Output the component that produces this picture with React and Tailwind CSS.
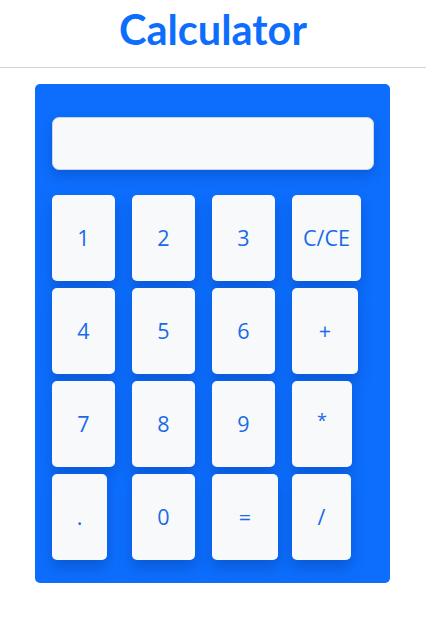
export default function App() {
  const rows = [
    [["1", 63], ["2", 63], ["3", 63], ["C/CE", 69]],
    [["4", 63], ["5", 63], ["6", 63], ["+", 66]],
    [["7", 63], ["8", 63], ["9", 63], ["*", 60]],
    [[".", 55], ["0", 63], ["=", 66], ["/", 59]],
  ];
  const widthClass = {
    63: "w-[63px]",
    69: "w-[69px]",
    66: "w-[66px]",
    60: "w-[60px]",
    55: "w-[55px]",
    59: "w-[59px]",
  };
  return (
    <div className="min-h-[620px] bg-white" style={{ fontFamily: '"Open Sans", "Noto Sans", sans-serif' }}>
      <header className="h-[68px] border-b border-[#d4d4d4] flex justify-center pt-[4px]">
        <h1
          className="text-[41.5px] leading-[50px] font-bold text-[#0d6efd]"
          style={{ fontFamily: 'Lato, "Open Sans", sans-serif' }}
        >
          Calculator
        </h1>
      </header>
      <div className="ml-[35px] mt-[16px] w-[355px] rounded-[5px] bg-[#0d6efd] pl-[17px] pr-[16px] pt-[33px] pb-[23px]">
        <div className="h-[53px] w-[322px] rounded-[7px] border border-[#c9d4e6] bg-[#f8f9fa] shadow-[0_6px_12px_rgba(0,40,120,0.25)]" />
        <div className="mt-[25px] flex flex-col gap-[7px]">
          {rows.map((row, i) => (
            <div key={i} className="grid grid-cols-4 w-[320px]">
              {row.map(([label, w]) => (
                <div key={label} className="flex">
                  <button
                    className={`${widthClass[w]} h-[86px] rounded-[5px] bg-[#f8f9fa] text-[#1a6ae8] text-[21.5px] flex items-center justify-center shadow-[0_8px_14px_rgba(0,40,120,0.28)]`}
                  >
                    {label === "*" ? <span className="text-[18px] -mt-[8px]">*</span> : label}
                  </button>
                </div>
              ))}
            </div>
          ))}
        </div>
      </div>
    </div>
  );
}
